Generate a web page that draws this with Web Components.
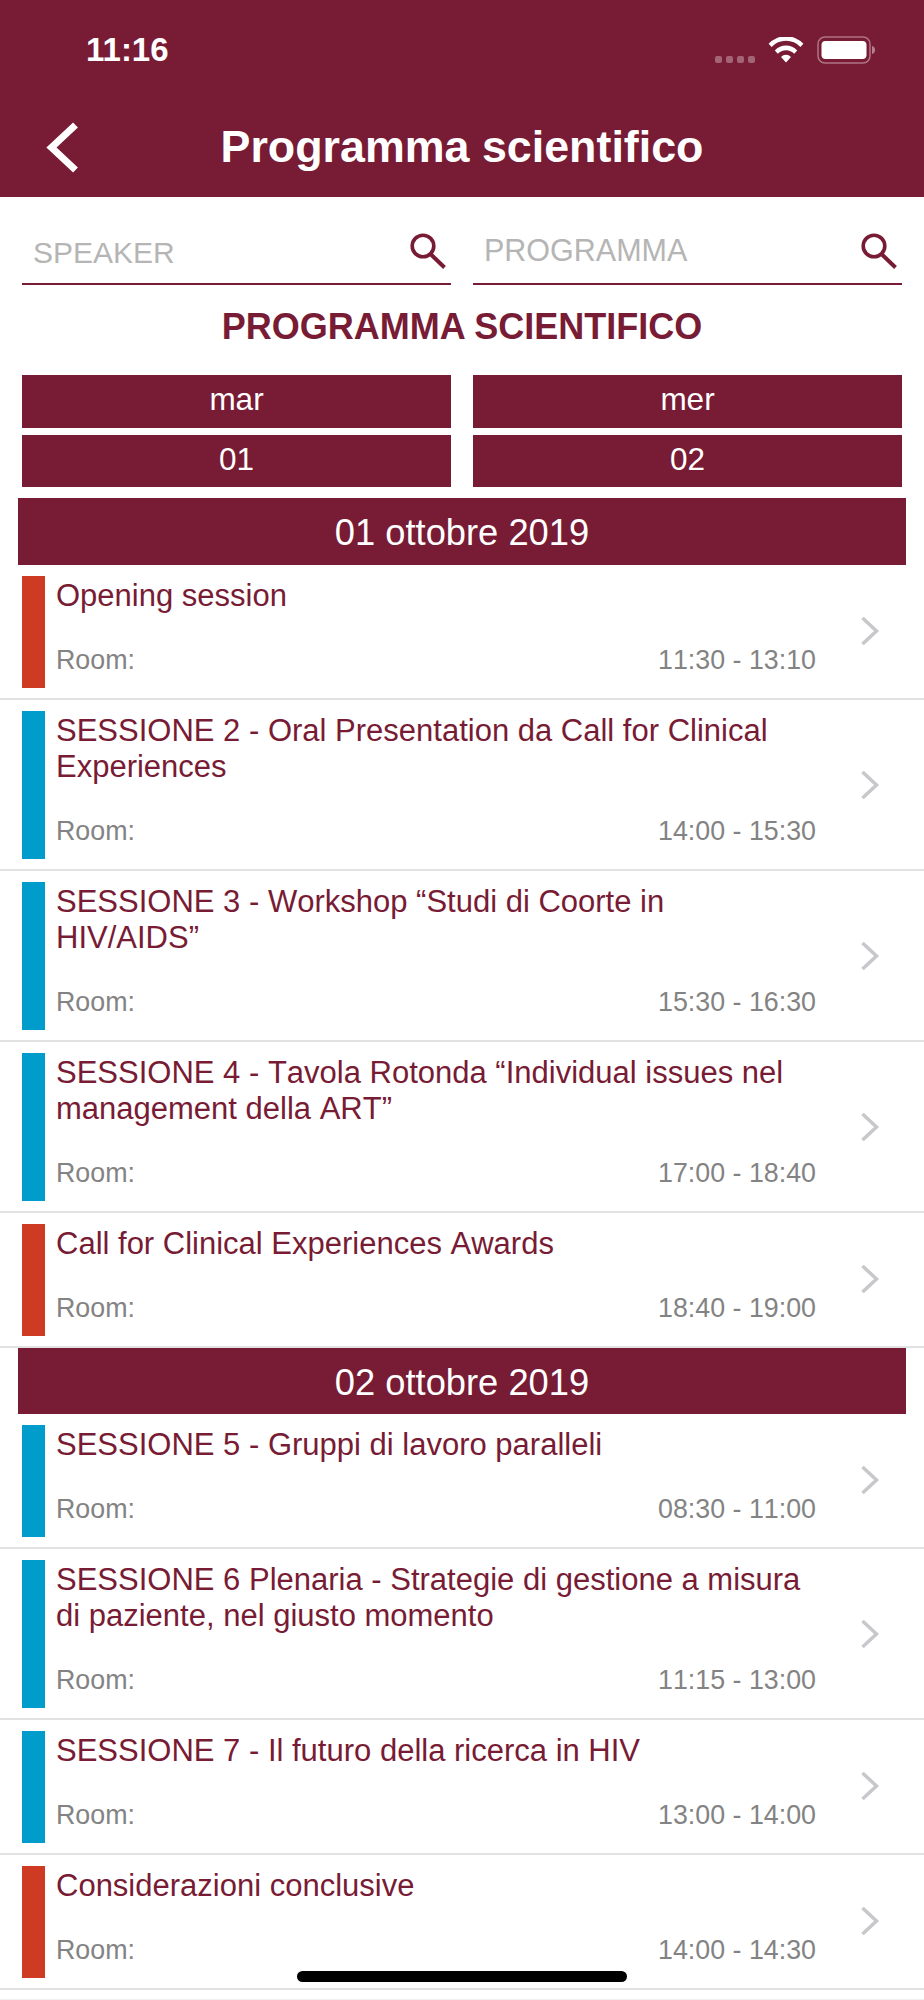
<!DOCTYPE html>
<html><head><meta charset="utf-8"><style>
html,body{margin:0;padding:0;background:#fff;font-family:"Liberation Sans",Arial,sans-serif}
body{width:924px;height:2000px;overflow:hidden;position:relative}
</style></head><body>
<app-header title="Programma scientifico"></app-header>
<search-row></search-row>
<section-title>PROGRAMMA SCIENTIFICO</section-title>
<day-grid></day-grid>
<date-band>01 ottobre 2019</date-band>
<session-row color="r" time="11:30 - 13:10">Opening session</session-row>
<session-row color="b" time="14:00 - 15:30" lines="2">SESSIONE 2 - Oral Presentation da Call for Clinical Experiences</session-row>
<session-row color="b" time="15:30 - 16:30" lines="2">SESSIONE 3 - Workshop “Studi di Coorte in HIV/AIDS”</session-row>
<session-row color="b" time="17:00 - 18:40" lines="2">SESSIONE 4 - Tavola Rotonda “Individual issues nel management della ART”</session-row>
<session-row color="r" time="18:40 - 19:00">Call for Clinical Experiences Awards</session-row>
<date-band style="height:66px">02 ottobre 2019</date-band>
<session-row color="b" time="08:30 - 11:00">SESSIONE 5 - Gruppi di lavoro paralleli</session-row>
<session-row color="b" time="11:15 - 13:00" lines="2">SESSIONE 6 Plenaria - Strategie di gestione a misura di paziente, nel giusto momento</session-row>
<session-row color="b" time="13:00 - 14:00">SESSIONE 7 - Il futuro della ricerca in HIV</session-row>
<session-row color="r" time="14:00 - 14:30">Considerazioni conclusive</session-row>
<list-tail></list-tail>
<home-bar></home-bar>
<script>
const M='#781b34';
function def(name,html){customElements.define(name,class extends HTMLElement{constructor(){super();this.attachShadow({mode:'open'}).innerHTML=typeof html==='function'?html(this):html;}})}
def('app-header',`<style>:host{display:block;height:197px;background:${M};color:#fff}
.st{height:100px;display:flex;align-items:center;padding:0 49px 0 86px;box-sizing:border-box}
.time{font-size:33px;font-weight:700;flex:1}
.dots{display:flex;gap:4px;margin-right:13px;margin-top:19px}.dots i{width:7px;height:7px;border-radius:2px;background:rgba(255,255,255,.32)}
.bar{height:97px;display:flex;align-items:center;justify-content:center;position:relative;padding-bottom:5px;box-sizing:border-box}
.t{font-size:44.800px;font-weight:700}
svg{display:block}.back{position:absolute;left:46px;top:17px}
</style>
<div class="st"><span class="time">11:16</span><span class="dots"><i></i><i></i><i></i><i></i></span>
<svg width="36" height="28" viewBox="0 0 36 28" style="margin-right:13px;margin-top:2px"><path d="M18 25.500l-5-5.600a7 7 0 0 1 10 0zM9.800 16.800l-3-3.400a15.500 15.500 0 0 1 22.400 0l-3 3.400a11 11 0 0 0-16.400 0zM3.600 10l-3-3.300a24 24 0 0 1 34.800 0l-3 3.300a19.500 19.500 0 0 0-28.800 0z" fill="#fff"/></svg>
<svg width="58" height="28" viewBox="0 0 58 28"><rect x="1" y="1" width="52" height="26" rx="7" fill="none" stroke="#fff" stroke-opacity=".4" stroke-width="1.500"/><rect x="4.500" y="5" width="45" height="18" rx="4" fill="#fff"/><path d="M55 10c2 .5 3 2 3 4s-1 3.500-3 4z" fill="#fff" fill-opacity=".45"/></svg></div>
<div class="bar"><svg class="back" width="34" height="58" viewBox="0 0 34 58"><path d="M29.500 8L5.500 30.500L29.500 53" fill="none" stroke="#fff" stroke-width="7"/></svg><span class="t">Programma scientifico</span></div>`);
const lens=`<svg width="38" height="38" viewBox="0 0 38 38"><circle cx="13" cy="13" r="10.800" fill="none" stroke="${M}" stroke-width="3.600"/><path d="M20.500 21L34.500 34.500" stroke="${M}" stroke-width="4" fill="none"/></svg>`;
def('search-row',`<style>:host{display:flex;gap:22px;padding:0 22px;height:88px;box-sizing:border-box}
.f{flex:1;border-bottom:2px solid ${M};position:relative;color:#b5b5b5;font-size:30.500px}
.f span{position:absolute;left:11px}svg{position:absolute;right:3px;top:36px}</style>
<div class="f"><span style="top:39px;font-size:30px">SPEAKER</span>${lens}</div><div class="f"><span style="top:36px">PROGRAMMA</span>${lens}</div>`);
def('section-title',`<style>:host{display:block;height:90px;padding-top:22px;box-sizing:border-box;text-align:center;color:${M};font-weight:700;font-size:36px;line-height:40px}</style><slot></slot>`);
def('day-grid',`<style>:host{display:grid;grid-template-columns:1fr 1fr;grid-template-rows:53px 52px;gap:7px 22px;padding:0 22px;margin-bottom:11px}
div{background:${M};color:#fff;text-align:center;font-size:31.500px;line-height:48px}</style><div>mar</div><div>mer</div><div>01</div><div>02</div>`);
def('date-band',`<style>:host{display:block;margin:0 18px;height:67px;line-height:69px;background:${M};color:#fff;text-align:center;font-size:36.300px}</style><slot></slot>`);
def('session-row',h=>{const two=h.getAttribute('lines')==='2';const c=h.getAttribute('color')==='r'?'#ce3b22':'#009ccb';
return `<style>:host{display:flex;box-sizing:border-box;height:${two?171:135}px;border-bottom:2px solid #e2e2e2;padding:11px 0 0 22px;position:relative}
.bar{width:23px;height:${two?148:112}px;background:${c};flex:none}
.m{flex:none;width:760px;margin-left:11px;display:flex;flex-direction:column;height:${two?148:112}px;font-kerning:none}
.t{color:${M};font-size:31px;line-height:36px;flex:1;padding:2px 4px 0 0}
.b{display:flex;justify-content:space-between;color:#838383;font-size:26.800px;line-height:30px;box-sizing:border-box;margin-bottom:13px}
svg{position:absolute;right:44px;top:50%;margin-top:${two?-15:-16}px}</style>
<div class="bar"></div><div class="m"><div class="t"><slot></slot></div><div class="b"><span>Room:</span><span>${h.getAttribute('time')}</span></div></div>
<svg width="20" height="30" viewBox="0 0 20 30"><path d="M2.500 2L16.500 15L2.500 28" fill="none" stroke="#c7c7cc" stroke-width="3.500"/></svg>`});
def('list-tail',`<style>:host{display:block;height:1px;margin-top:9px;background:#efefef}</style>`);
def('home-bar',`<style>:host{position:absolute;left:297px;top:1971px;width:330px;height:11px;border-radius:6px;background:#000}</style>`);
</script></body></html>
